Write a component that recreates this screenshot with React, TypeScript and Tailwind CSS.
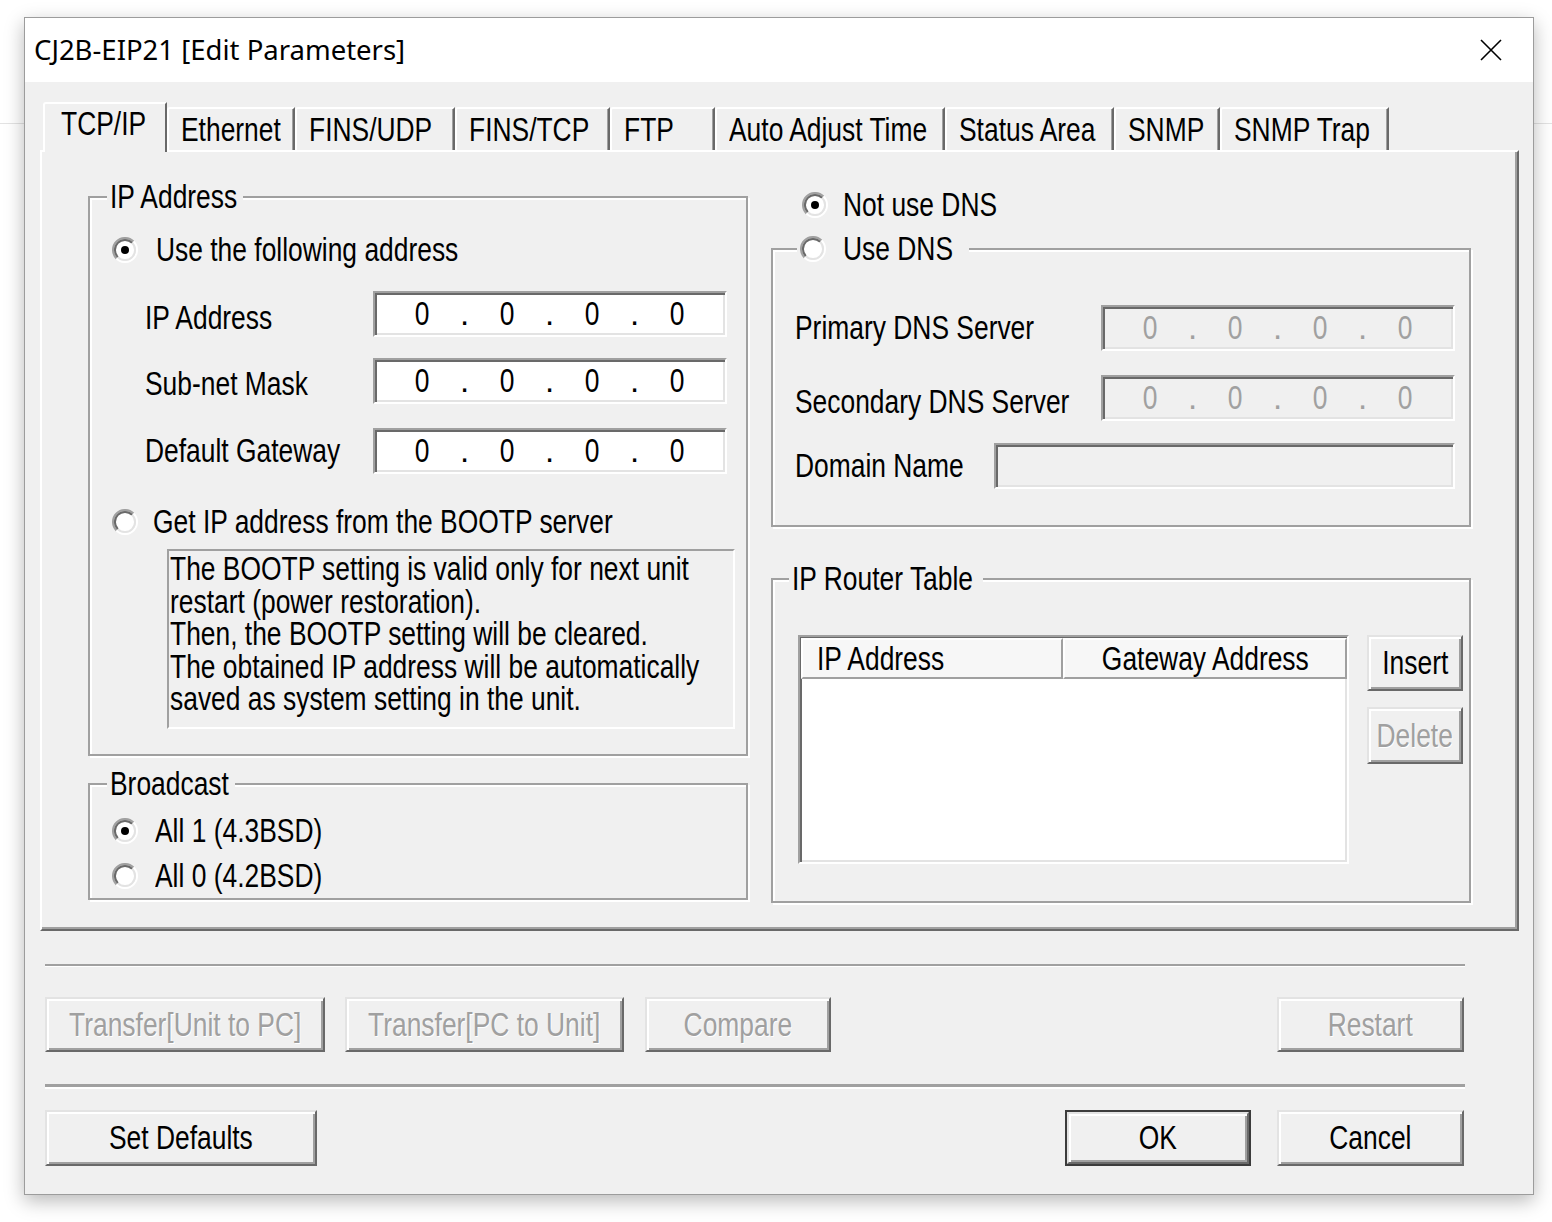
import { Fragment, ReactNode } from "react";
import clsx from "clsx";

const ui = "font-['Liberation_Sans',Arial,sans-serif] text-[33px] text-black";

// classic 3D bevels (scaled 2x)
const bevelUp =
  "border-2 border-t-[#e3e3e3] border-l-[#e3e3e3] border-r-[#696969] border-b-[#696969] shadow-[inset_2px_2px_0_#fff,inset_-2px_-2px_0_#a0a0a0]";
const bevelDown =
  "border-2 border-t-[#a0a0a0] border-l-[#a0a0a0] border-r-white border-b-white shadow-[inset_2px_2px_0_#696969,inset_-2px_-2px_0_#e3e3e3]";
const disabledText = "text-[#a0a0a0] [text-shadow:1px_1px_0_#fff]";

const tabs: [string, string][] = [
  ["Ethernet", "w-[128px]"],
  ["FINS/UDP", "w-[160px]"],
  ["FINS/TCP", "w-[155px]"],
  ["FTP", "w-[105px]"],
  ["Auto Adjust Time", "w-[230px]"],
  ["Status Area", "w-[169px]"],
  ["SNMP", "w-[106px]"],
  ["SNMP Trap", "w-[169px]"],
];

// the dialog font is a narrow bitmap face; squeeze Liberation Sans to its width
function T({ children, center }: { children: ReactNode; center?: boolean }) {
  return (
    <span
      className={clsx(
        "inline-block scale-x-[0.8] whitespace-nowrap",
        center ? "origin-center" : "origin-left"
      )}
    >
      {children}
    </span>
  );
}

function Radio({ checked }: { checked?: boolean }) {
  return (
    <svg width="26" height="26" viewBox="0 0 26 26" className="shrink-0">
      <circle cx="13" cy="13" r="10" fill="#fff" />
      <path d="M4.5 21.5A12 12 0 0 1 21.5 4.5" fill="none" stroke="#a0a0a0" strokeWidth="2" />
      <path d="M21.5 4.5A12 12 0 0 1 4.5 21.5" fill="none" stroke="#fff" strokeWidth="2" />
      <path d="M5.9 20.1A10 10 0 0 1 20.1 5.9" fill="none" stroke="#696969" strokeWidth="2" />
      <path d="M20.1 5.9A10 10 0 0 1 5.9 20.1" fill="none" stroke="#e3e3e3" strokeWidth="2" />
      {checked && <circle cx="13" cy="13" r="4" fill="#000" />}
    </svg>
  );
}

function RadioRow({
  checked,
  children,
  className,
}: {
  checked?: boolean;
  children: ReactNode;
  className?: string;
}) {
  return (
    <div className={clsx("flex h-[36px] items-center leading-[36px]", className)}>
      <Radio checked={checked} />
      <T>{children}</T>
    </div>
  );
}

function Group({
  title,
  className,
  children,
}: {
  title: ReactNode;
  className?: string;
  children?: ReactNode;
}) {
  return (
    <div
      className={clsx(
        "relative flex flex-col border-2 border-[#a0a0a0] shadow-[inset_2px_2px_0_#fff,2px_2px_0_#fff]",
        className
      )}
    >
      {title}
      {children}
    </div>
  );
}

function GroupTitle({ children, className }: { children: ReactNode; className: string }) {
  return (
    <div className={clsx("absolute -top-[19px] bg-[#f0f0f0] px-[3px] leading-[36px]", className)}>
      <T>{children}</T>
    </div>
  );
}

function IpField({ disabled }: { disabled?: boolean }) {
  return (
    <div
      className={clsx(
        "flex h-[46px] w-[354px] shrink-0 items-center pl-[12px] leading-[36px]",
        bevelDown,
        disabled ? "bg-[#f0f0f0] text-[#a0a0a0]" : "bg-white"
      )}
    >
      {[0, 1, 2, 3].map((i) => (
        <Fragment key={i}>
          {i > 0 && <span className="w-[15px] text-center">.</span>}
          <span className="w-[70px] text-center">
            <T center>0</T>
          </span>
        </Fragment>
      ))}
    </div>
  );
}

function Btn({
  children,
  className,
  disabled,
  primary,
}: {
  children: ReactNode;
  className?: string;
  disabled?: boolean;
  primary?: boolean;
}) {
  return (
    <div className={clsx("flex shrink-0", primary && "border-2 border-[#3c3c3c]", className)}>
      <div
        className={clsx(
          "flex min-w-0 flex-1 items-center justify-center bg-[#f0f0f0] leading-[36px]",
          bevelUp,
          disabled && disabledText
        )}
      >
        <T center>{children}</T>
      </div>
    </div>
  );
}

function IpAddressGroup() {
  return (
    <Group className="h-[560px]" title={<GroupTitle className="left-[17px] w-[136px]">IP Address</GroupTitle>}>
      <RadioRow checked className="ml-[22px] mt-[34px] gap-[18px]">
        Use the following address
      </RadioRow>

      {[
        ["IP Address", "mt-[23px]", "pt-[8px]"],
        ["Sub-net Mask", "mt-[21px]", "pt-[5px]"],
        ["Default Gateway", "mt-[24px]", "pt-0"],
      ].map(([label, mt, pt]) => (
        <div key={label} className={clsx("flex items-center pl-[55px]", mt)}>
          <span className={clsx("w-[228px] shrink-0 leading-[36px]", pt)}>
            <T>{label}</T>
          </span>
          <IpField />
        </div>
      ))}

      <RadioRow className="ml-[22px] mt-[30px] gap-[15px]">
        Get IP address from the BOOTP server
      </RadioRow>

      <div className="ml-[77px] mt-[9px] flex h-[180px] w-[568px] flex-col border-2 border-t-[#a0a0a0] border-l-[#a0a0a0] border-r-white border-b-white pl-px pt-[2px] leading-[32.5px]">
        <T>The BOOTP setting is valid only for next unit</T>
        <T>restart (power restoration).</T>
        <T>Then, the BOOTP setting will be cleared.</T>
        <T>The obtained IP address will be automatically</T>
        <T>saved as system setting in the unit.</T>
      </div>
    </Group>
  );
}

function BroadcastGroup() {
  return (
    <Group
      className="mt-[27px] h-[117px]"
      title={<GroupTitle className="left-[17px] w-[128px]">Broadcast</GroupTitle>}
    >
      <RadioRow checked className="ml-[22px] mt-[28px] gap-[17px]">
        All 1 (4.3BSD)
      </RadioRow>
      <RadioRow className="ml-[22px] mt-[9px] gap-[17px]">All 0 (4.2BSD)</RadioRow>
    </Group>
  );
}

function DnsGroup() {
  return (
    <Group
      className="mt-[25px] h-[279px]"
      title={
        <RadioRow className="absolute -top-[19px] left-[24px] w-[172px] gap-[17px] bg-[#f0f0f0] px-[3px]">
          Use DNS
        </RadioRow>
      }
    >
      <div className="mt-[55px] flex items-center pl-[22px]">
        <span className="w-[306px] shrink-0 leading-[36px]">
          <T>Primary DNS Server</T>
        </span>
        <IpField disabled />
      </div>
      <div className="mt-[24px] flex items-center pl-[22px]">
        <span className="w-[306px] shrink-0 pt-[8px] leading-[36px]">
          <T>Secondary DNS Server</T>
        </span>
        <IpField disabled />
      </div>
      <div className="mt-[22px] flex items-center pl-[22px]">
        <span className="w-[199px] shrink-0 leading-[36px]">
          <T>Domain Name</T>
        </span>
        <div className={clsx("h-[46px] w-[461px] shrink-0 bg-[#f0f0f0]", bevelDown)} />
      </div>
    </Group>
  );
}

function RouterGroup() {
  return (
    <Group
      className="mt-[51px] h-[325px]"
      title={<GroupTitle className="left-[16px] w-[194px]">IP Router Table</GroupTitle>}
    >
      <div className="mt-[55px] flex items-start pl-[25px]">
        <div className={clsx("h-[229px] w-[551px] shrink-0 bg-white pl-px pt-px", bevelDown)}>
          <div className="flex h-[41px] leading-[36px]">
            <div className="flex w-[262px] items-center border-2 border-t-white border-l-white border-r-[#a0a0a0] border-b-[#a0a0a0] bg-[#f7f7f7] pl-[14px]">
              <T>IP Address</T>
            </div>
            <div className="flex w-[284px] items-center justify-center border-2 border-t-white border-l-white border-r-[#a0a0a0] border-b-[#a0a0a0] bg-[#f7f7f7]">
              <T center>Gateway Address</T>
            </div>
          </div>
        </div>
        <div className="ml-[18px] flex flex-col">
          <Btn className="h-[56px] w-[96px]">Insert</Btn>
          <Btn disabled className="mt-[16px] h-[57px] w-[96px]">
            Delete
          </Btn>
        </div>
      </div>
    </Group>
  );
}

export default function App() {
  return (
    <div className={clsx("relative h-[1222px] w-[1552px] overflow-hidden bg-white", ui)}>
      {/* desktop behind the dialog */}
      <div className="absolute inset-x-0 top-[123px] h-px bg-[#e3e3e3]" />

      {/* Dialog window */}
      <div className="absolute left-[24px] top-[17px] flex h-[1178px] w-[1510px] flex-col border border-[#9c9c9c] bg-[#f0f0f0] shadow-[0_6px_18px_rgba(0,0,0,0.28)]">
        {/* Title bar */}
        <div className="flex h-[64px] items-center justify-between bg-white pl-[9px] pr-[31px]">
          <span className="font-['Noto_Sans',sans-serif] text-[27.5px] leading-none">
            CJ2B-EIP21 [Edit Parameters]
          </span>
          <svg width="22" height="22" viewBox="0 0 22 22">
            <path d="M1 1L21 21M21 1L1 21" stroke="#000" strokeWidth="1.6" />
          </svg>
        </div>

        <div className="flex flex-col pt-[20px]">
          {/* Tabs */}
          <div className="ml-[15px] flex h-[48px] items-end pl-[3px]">
            <div className="relative z-10 -mb-[2px] h-[50px] w-[124px] shrink-0 rounded-tl-[3px] border-l-2 border-r-2 border-t-2 border-l-white border-r-[#696969] border-t-white bg-[#f0f0f0] pl-[16px] pt-[2px] leading-[36px]">
              <T>TCP/IP</T>
            </div>
            {tabs.map(([t, w]) => (
              <div
                key={t}
                className={clsx(
                  "flex h-[43px] shrink-0 items-center rounded-tl-[3px] border-l-2 border-r-2 border-t-2 border-l-white border-r-[#696969] border-t-white pl-[12px] leading-[36px] shadow-[inset_-1px_0_0_#a0a0a0]",
                  w
                )}
              >
                <T>{t}</T>
              </div>
            ))}
          </div>

          {/* Tab page */}
          <div className="ml-[15px] flex h-[781px] w-[1479px] border-2 border-b-[#696969] border-l-white border-r-[#696969] border-t-white pl-[46px] shadow-[inset_-2px_-2px_0_#a0a0a0]">
            <div className="flex w-[660px] shrink-0 flex-col pt-[44px]">
              <IpAddressGroup />
              <BroadcastGroup />
            </div>

            <div className="ml-[23px] flex w-[700px] shrink-0 flex-col pt-[35px]">
              <RadioRow checked className="gap-[15px] pl-[31px]">
                Not use DNS
              </RadioRow>
              <DnsGroup />
              <RouterGroup />
            </div>
          </div>

          {/* Bottom buttons */}
          <div className="ml-[20px] flex w-[1420px] flex-col">
            <div className="mt-[33px] border-b border-t-2 border-b-white border-t-[#a0a0a0]" />

            <div className="mt-[30px] flex h-[55px]">
              <Btn disabled className="w-[280px]">
                Transfer[Unit to PC]
              </Btn>
              <Btn disabled className="ml-[20px] w-[279px]">
                Transfer[PC to Unit]
              </Btn>
              <Btn disabled className="ml-[21px] w-[186px]">
                Compare
              </Btn>
              <Btn disabled className="ml-auto mr-px w-[187px]">
                Restart
              </Btn>
            </div>

            <div className="mt-[32px] border-b-2 border-t-[3px] border-b-white border-t-[#a0a0a0]" />

            <div className="mt-[21px] flex h-[56px]">
              <Btn className="w-[272px]">Set Defaults</Btn>
              <Btn primary className="ml-auto w-[186px]">
                OK
              </Btn>
              <Btn className="ml-[26px] mr-px w-[187px]">Cancel</Btn>
            </div>
          </div>
        </div>
      </div>
    </div>
  );
}
